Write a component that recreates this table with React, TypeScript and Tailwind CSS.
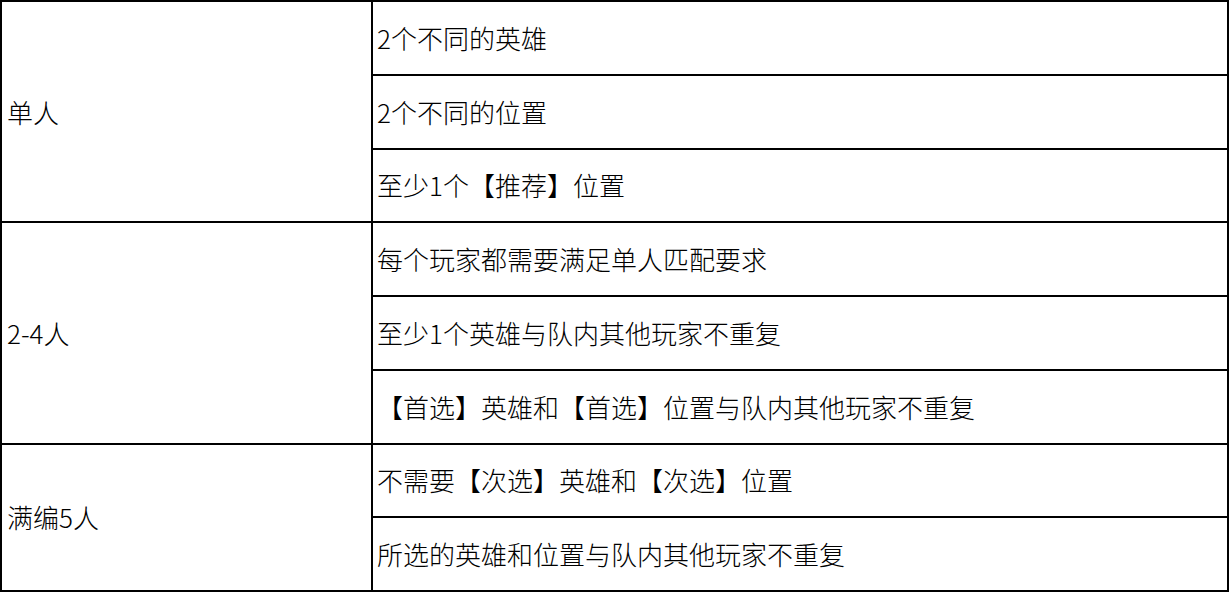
const groups = [
  { label: '单人', rows: ['2个不同的英雄', '2个不同的位置', '至少1个【推荐】位置'] },
  {
    label: '2-4人',
    rows: ['每个玩家都需要满足单人匹配要求', '至少1个英雄与队内其他玩家不重复', '【首选】英雄和【首选】位置与队内其他玩家不重复'],
  },
  { label: '满编5人', rows: ['不需要【次选】英雄和【次选】位置', '所选的英雄和位置与队内其他玩家不重复'] },
]

export default function App() {
  return (
    <div className="w-[1230px] h-[593px] bg-white">
      <div
        className="w-[1229px] border-2 border-black text-black text-[26px] font-light leading-none"
        style={{ fontFamily: '"Noto Sans CJK SC", "Noto Sans", sans-serif' }}
      >
        {groups.map((g, gi) => (
          <div key={gi} className={`flex ${gi > 0 ? 'border-t-2 border-black' : ''}`}>
            {/* label cell */}
            <div className="w-[371px] shrink-0 border-r-2 border-black flex items-center pl-[5px]">
              {g.label}
            </div>
            {/* rule rows */}
            <div className="flex-1 flex flex-col">
              {g.rows.map((r, ri) => (
                <div
                  key={ri}
                  className={`h-[71.75px] flex items-center pl-[4px] ${ri > 0 ? 'border-t-2 border-black h-[73.75px]' : ''}`}
                >
                  {r}
                </div>
              ))}
            </div>
          </div>
        ))}
      </div>
    </div>
  )
}
